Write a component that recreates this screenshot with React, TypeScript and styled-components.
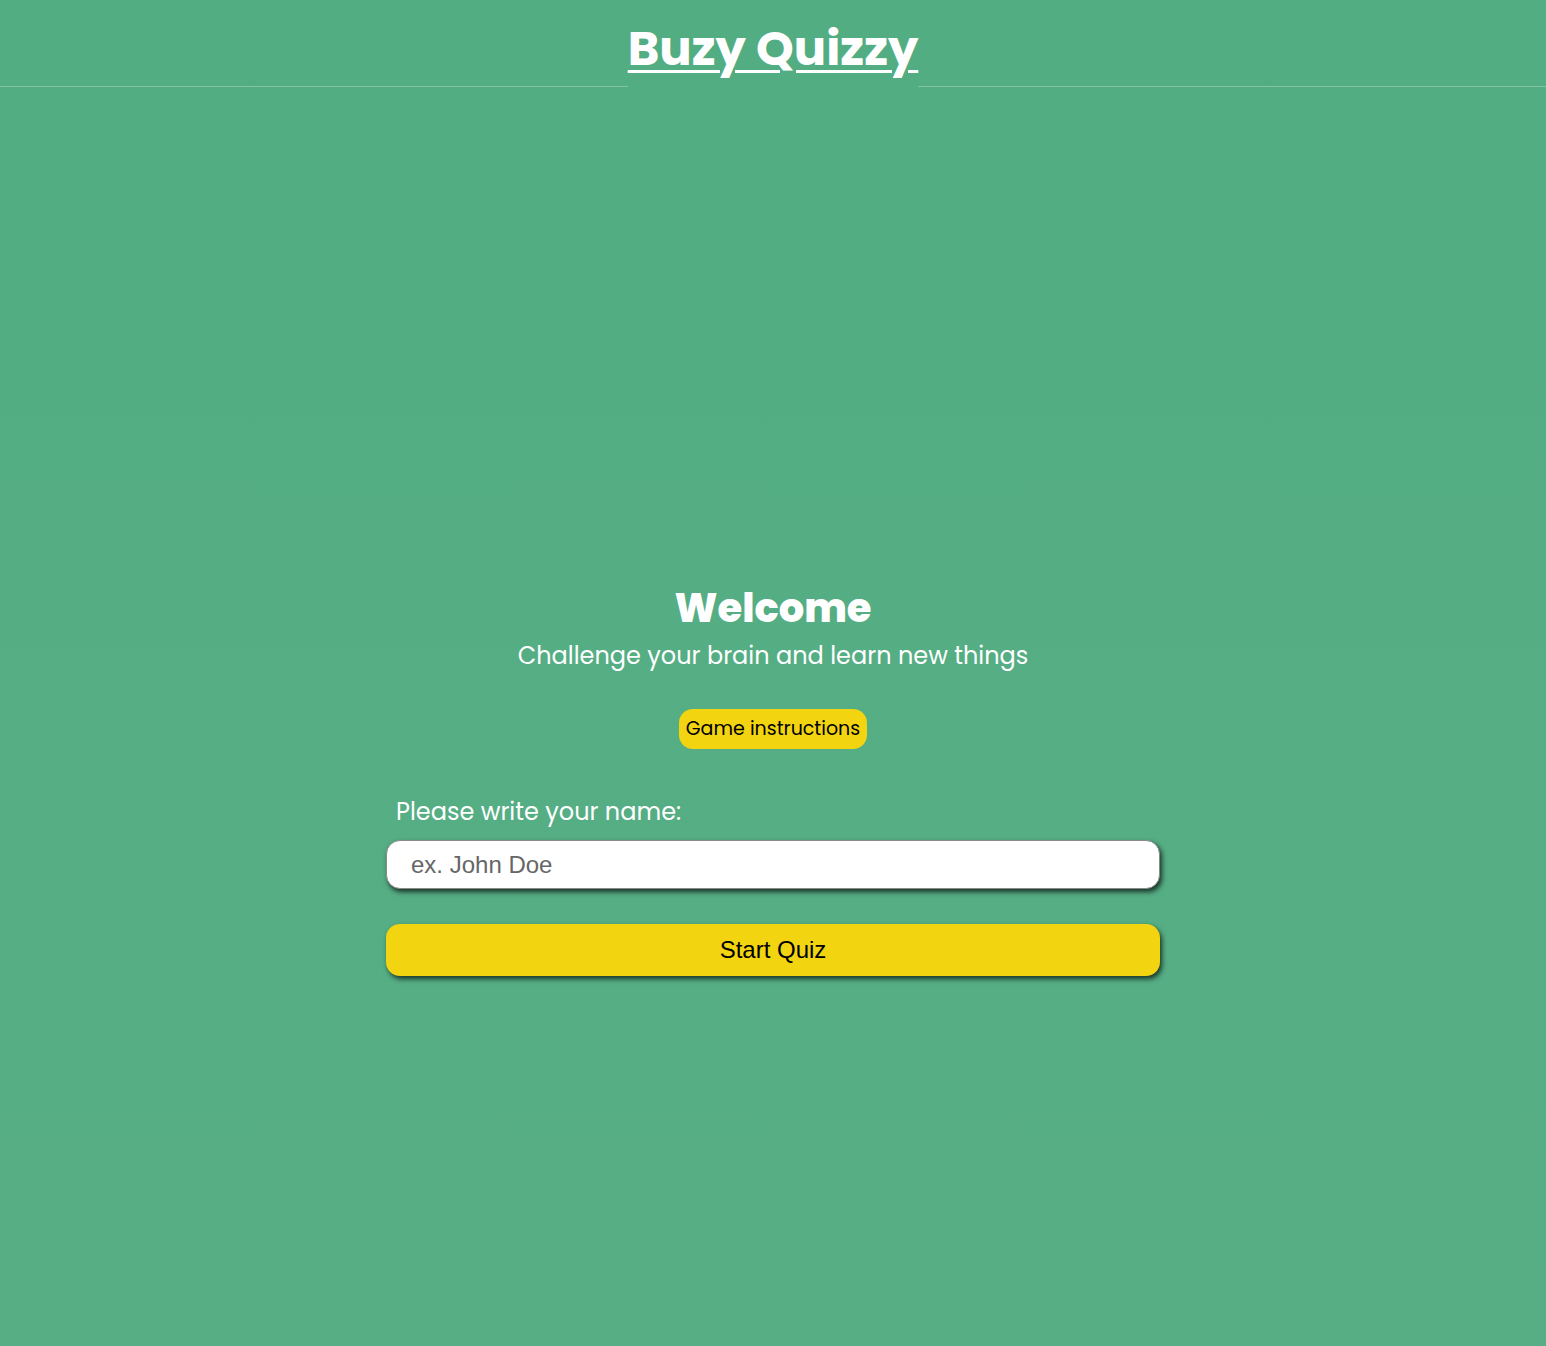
import React from "react";
import styled, { createGlobalStyle } from "styled-components";

const GlobalStyle = createGlobalStyle`
  html, body {
    margin: 0;
    padding: 0;
  }
  body {
    min-height: 1346px;
    background: linear-gradient(180deg, #52ad82 0%, #57ae85 100%);
    font-family: "Poppins", Inter, "Noto Sans", sans-serif;
  }
  * { box-sizing: border-box; }
`;

const Page = styled.div`
  min-height: 1346px;
  display: flex;
  flex-direction: column;
`;

const Header = styled.header`
  height: 87px;
  border-bottom: 1px solid rgba(255, 255, 255, 0.28);
  display: flex;
  justify-content: center;
  align-items: flex-start;
`;

const Title = styled.a`
  display: block;
  height: 87px;
  padding-top: 20px;
  background: #52ad82;
  color: #ffffff;
  font-family: "Poppins", Inter, sans-serif;
  font-weight: 700;
  font-size: 48px;
  line-height: 58px;
  text-decoration: underline;
  text-decoration-thickness: 3px;
  text-underline-offset: 5px;
  cursor: pointer;
`;

const Main = styled.main`
  display: flex;
  flex-direction: column;
  align-items: center;
  padding-top: 497px;
`;

const Welcome = styled.h2`
  margin: 0;
  color: #ffffff;
  font-family: "Poppins", Inter, sans-serif;
  font-weight: 800;
  font-size: 40px;
  line-height: 48px;
`;

const Subtitle = styled.p`
  margin: 8px 0 0;
  color: #ffffff;
  font-family: "Poppins", Inter, sans-serif;
  font-weight: 400;
  font-size: 24px;
  line-height: 32px;
`;

const PillButton = styled.button`
  margin-top: 37px;
  height: 40px;
  padding: 0 7px;
  border: none;
  border-radius: 14px;
  background: #f2d411;
  color: #000000;
  font-family: "Poppins", Inter, sans-serif;
  font-size: 19px;
  line-height: 40px;
  cursor: pointer;
`;

const Form = styled.form`
  width: 774px;
  margin-top: 47px;
  display: flex;
  flex-direction: column;
`;

const Label = styled.label`
  padding-left: 10px;
  color: #ffffff;
  font-family: "Poppins", Inter, sans-serif;
  font-size: 24px;
  line-height: 32px;
`;

const NameInput = styled.input`
  margin-top: 12px;
  height: 49px;
  width: 100%;
  padding: 0 24px;
  border: 1px solid #8a8a8a;
  border-radius: 14px;
  background: #ffffff;
  box-shadow: 2px 3px 5px rgba(0, 0, 0, 0.7);
  font-family: "Liberation Sans", Arial, sans-serif;
  font-size: 24px;
  color: #222;
  outline: none;
  &::placeholder {
    color: #666666;
  }
`;

const StartButton = styled.button`
  margin-top: 35px;
  height: 52px;
  width: 100%;
  border: none;
  border-radius: 14px;
  background: #f2d411;
  box-shadow: 2px 3px 5px rgba(0, 0, 0, 0.7);
  font-family: "Liberation Sans", Arial, sans-serif;
  font-size: 24px;
  color: #000000;
  cursor: pointer;
`;

export default function App() {
  return (
    <Page>
      <GlobalStyle />
      <Header>
        <Title>Buzy Quizzy</Title>
      </Header>
      <Main>
        <Welcome>Welcome</Welcome>
        <Subtitle>Challenge your brain and learn new things</Subtitle>
        <PillButton type="button">Game instructions</PillButton>
        <Form onSubmit={(e) => e.preventDefault()}>
          <Label htmlFor="name">Please write your name:</Label>
          <NameInput id="name" type="text" placeholder="ex. John Doe" />
          <StartButton type="submit">Start Quiz</StartButton>
        </Form>
      </Main>
    </Page>
  );
}
